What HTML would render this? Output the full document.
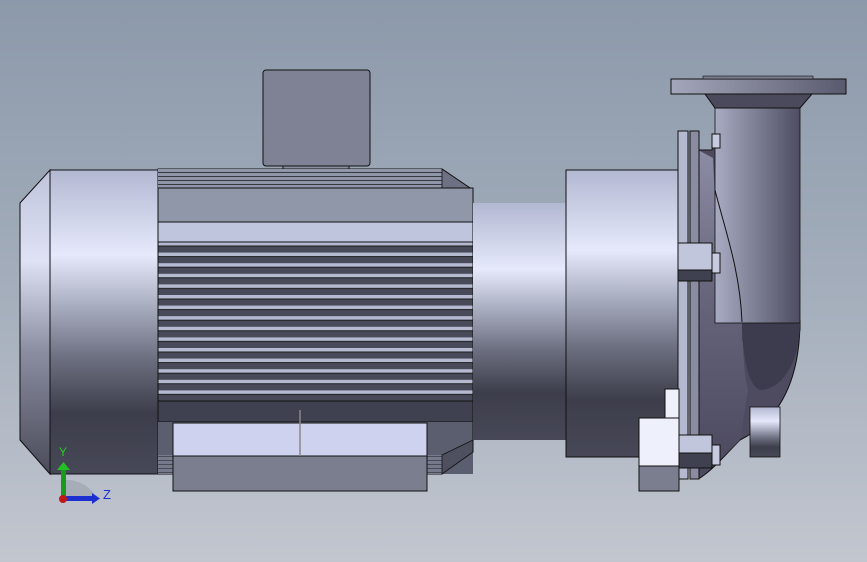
<!DOCTYPE html>
<html><head><meta charset="utf-8"><style>
html,body{margin:0;padding:0;width:867px;height:562px;overflow:hidden}
svg{display:block}
</style></head><body>
<svg width="867" height="562" viewBox="0 0 867 562" xmlns="http://www.w3.org/2000/svg">
<defs>
<linearGradient id="bg" x1="0" y1="0" x2="0" y2="1">
<stop offset="0" stop-color="#8c99aa"/><stop offset="0.5" stop-color="#a3adbb"/><stop offset="1" stop-color="#c2c6cf"/>
</linearGradient>
<linearGradient id="cyl" x1="0" y1="0" x2="0" y2="1">
<stop offset="0" stop-color="#b3b8d2"/><stop offset="0.28" stop-color="#e6e9fb"/><stop offset="0.45" stop-color="#a8acbf"/><stop offset="0.62" stop-color="#6c6f80"/><stop offset="0.8" stop-color="#3d3e4b"/><stop offset="1" stop-color="#474857"/>
</linearGradient>
<linearGradient id="cap" x1="0" y1="0" x2="0" y2="1">
<stop offset="0" stop-color="#c0c4dc"/><stop offset="0.3" stop-color="#dfe2f5"/><stop offset="0.6" stop-color="#8a8da0"/><stop offset="1" stop-color="#4a4b5a"/>
</linearGradient>
<linearGradient id="pipe" x1="0" y1="0" x2="1" y2="0">
<stop offset="0" stop-color="#a8abc2"/><stop offset="0.5" stop-color="#7b7d92"/><stop offset="1" stop-color="#4e4d62"/>
</linearGradient>
<linearGradient id="vol" x1="0" y1="0" x2="0" y2="1">
<stop offset="0" stop-color="#8c8ca4"/><stop offset="0.45" stop-color="#66657c"/><stop offset="1" stop-color="#4b485e"/>
</linearGradient>
<linearGradient id="fl" x1="0" y1="0" x2="1" y2="0">
<stop offset="0" stop-color="#a4a7bb"/><stop offset="1" stop-color="#5a5a6e"/>
</linearGradient>
<pattern id="fins" x="0" y="242" width="10" height="10.6" patternUnits="userSpaceOnUse">
<rect width="10" height="10.6" fill="#484a5a"/><rect width="10" height="3.6" fill="#b5bad1"/><rect y="3.6" width="10" height="0.8" fill="#111"/>
</pattern>
<pattern id="tfins" x="0" y="169" width="10" height="4" patternUnits="userSpaceOnUse">
<rect width="10" height="4" fill="#9096a9"/><rect y="3.3" width="10" height="0.7" fill="#111"/>
</pattern>
</defs>
<rect width="867" height="562" fill="url(#bg)"/>

<polygon points="20,203 50,170 50,474 20,440" fill="url(#cap)" stroke="#111" stroke-width="1"/>
<rect x="50" y="170" width="108" height="304" fill="url(#cyl)" stroke="#111" stroke-width="1"/>

<rect x="283" y="164" width="66" height="11" fill="#8c8fa1" stroke="#111"/>
<rect x="263" y="70" width="107" height="96" rx="3" fill="#7f8295" stroke="#111"/>

<polygon points="158,169 442,169 473,190 473,452 442,474 158,474" fill="#5b5e6e" stroke="#111"/>
<rect x="158" y="169" width="284" height="19" fill="url(#tfins)"/>
<polygon points="442,169 473,190 473,222 442,188" fill="#6e7184" stroke="#111" stroke-width="0.8"/>
<rect x="158" y="188" width="315" height="34" fill="#9097a9" stroke="#111"/>
<rect x="158" y="222" width="315" height="20" fill="#c0c5de" stroke="#111"/>
<rect x="158" y="242" width="315" height="159" fill="url(#fins)" stroke="#111"/>
<rect x="158" y="401" width="315" height="21" fill="#3f4150" stroke="#111"/>
<rect x="158" y="422" width="315" height="52" fill="#5b5e6e"/>
<rect x="158" y="455" width="284" height="19" fill="url(#tfins)" opacity="0.5"/>
<polygon points="442,474 473,452 473,440 442,455" fill="#4e5060" stroke="#111" stroke-width="0.8"/>
<line x1="473" y1="190" x2="473" y2="452" stroke="#111"/>

<rect x="173" y="423" width="254" height="33" fill="#cfd2ef" stroke="#111"/>
<rect x="173" y="456" width="254" height="35" fill="#7b7e8f" stroke="#111"/>
<line x1="300" y1="410" x2="300" y2="456" stroke="#888" stroke-width="1.5"/>

<rect x="473" y="203" width="93" height="237" fill="url(#cyl)"/>
<rect x="566" y="170" width="114" height="287" fill="url(#cyl)" stroke="#111"/>

<path d="M712,150 L716,130 C735,200 740,260 742,330 C745,380 775,390 800,330 L800,320 C800,380 780,420 740,440 C725,455 715,468 700,478 L690,478 L690,150 Z" fill="#4e4b61" stroke="#111"/>
<path d="M698,150 L713,158 L715,200 C725,235 738,280 742,322 C743,360 745,380 748,390 L740,440 C725,455 712,468 698,476 Z" fill="url(#vol)"/>
<path d="M742,322 L800,322 C800,365 780,390 760,390 C748,385 743,360 742,322 Z" fill="#3d3b4e"/>
<rect x="715" y="108" width="85" height="215" fill="url(#pipe)" stroke="#111" stroke-width="0.8"/>
<path d="M715,190 C725,230 740,270 742,322" fill="none" stroke="#111"/>
<path d="M705,94 L812,94 L800,108 L715,108 Z" fill="#4a4a5c" stroke="#111"/>
<rect x="671" y="79" width="175" height="15" fill="url(#fl)" stroke="#111"/>
<rect x="703" y="76" width="110" height="3" fill="#7a7c8e" stroke="#111" stroke-width="0.6"/>
<rect x="750" y="407" width="30" height="50" fill="url(#cyl)" stroke="#111" stroke-width="0.8"/>

<rect x="678" y="131" width="10" height="348" fill="#b5b9d0" stroke="#111"/>
<rect x="690" y="131" width="9" height="348" fill="#8a8da2" stroke="#111"/>
<rect x="678" y="270" width="34" height="11" fill="#3f4150" stroke="#111"/>
<rect x="678" y="243" width="34" height="27" fill="#c2c6dc" stroke="#111"/>
<rect x="712" y="253" width="8" height="20" fill="#c8cbe0" stroke="#111"/>
<rect x="678" y="435" width="34" height="20" fill="#c2c6dc" stroke="#111"/>
<rect x="678" y="453" width="34" height="15" fill="#3f4150" stroke="#111"/>
<rect x="712" y="445" width="8" height="20" fill="#c8cbe0" stroke="#111"/>
<rect x="712" y="134" width="8" height="14" fill="#c8cbe0" stroke="#111"/>

<rect x="665" y="389" width="14" height="80" fill="#eef0fc" stroke="#111"/>
<rect x="639" y="418" width="40" height="48" fill="#eef0fc" stroke="#111"/>
<rect x="639" y="466" width="40" height="25" fill="#7b7e8f" stroke="#111"/>

<path d="M63,500 L63,480 A35,35 0 0 1 98,500 Z" fill="#9aa0ab" opacity="0.6"/>
<rect x="61" y="468" width="5" height="31" fill="#1a9a1a"/>
<polygon points="57,470 63.5,462 70,470" fill="#22c022"/>
<rect x="63" y="496" width="30" height="5" fill="#1c2fd0"/>
<polygon points="92,493 100,498.5 92,504" fill="#1c2fd0"/>
<circle cx="63" cy="499" r="4" fill="#c01818"/>
<text x="59" y="456" font-family="Liberation Sans, sans-serif" font-size="12" fill="#22cc22">Y</text>
<text x="103" y="499" font-family="Liberation Sans, sans-serif" font-size="13" fill="#1c2fd0">Z</text>
</svg>
</body></html>
